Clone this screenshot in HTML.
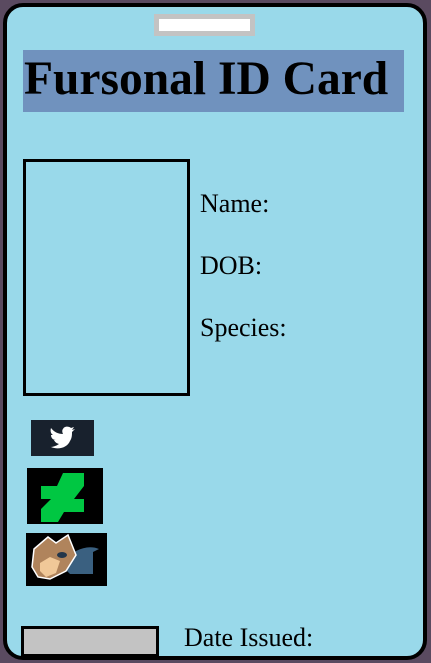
<!DOCTYPE html>
<html><head><style>
body{margin:0;width:431px;height:663px;background:#5a4a60;position:relative;overflow:hidden;font-family:"Liberation Serif",serif}
.card{position:absolute;left:3px;top:3px;width:416px;height:649px;background:#99d9ea;border:4px solid #000;border-radius:20px}
.a{position:absolute}
</style></head><body>
<div class="card"></div>
<div class="a" style="left:154px;top:14px;width:91px;height:12px;border:5px solid #c3c3c3;background:#fff"></div>
<div class="a" style="left:23px;top:50px;width:381px;height:62px;background:#7092be"></div>
<div class="a" style="left:24px;top:52px;font-weight:bold;font-size:47.5px;line-height:54px">Fursonal ID Card</div>
<div class="a" style="left:23px;top:159px;width:161px;height:231px;border:3px solid #000"></div>
<div class="a" style="left:200px;top:189px;font-size:26px">Name:</div>
<div class="a" style="left:200px;top:251px;font-size:26px">DOB:</div>
<div class="a" style="left:200px;top:313px;font-size:26px">Species:</div>
<div class="a" style="left:31px;top:420px;width:63px;height:36px;background:#18212d">
<svg width="63" height="36" viewBox="0 0 63 36"><path d="M20 27c7 3 16 1 19-6 2-3 2-6 2-9l3-3-3 1 2-3-3 1c-2-2-7-2-8 1-1 1-1 3 0 5-5 0-9-2-12-6-1 3 0 6 2 7h-2c0 3 2 5 5 5h-2c1 2 2 3 5 4-3 2-6 3-9 3z" fill="#fff"/></svg></div>
<div class="a" style="left:27px;top:468px;width:76px;height:56px;background:#000">
<svg width="76" height="56" viewBox="0 0 76 56"><path d="M14 18H30L36 5H57V18L47 31H57V44H37L31 54H14V41L24 31H14Z" fill="#00c742"/></svg></div>
<div class="a" style="left:26px;top:533px;width:81px;height:53px;background:#000">
<svg width="81" height="53" viewBox="0 0 81 53"><path d="M50 18c8-4 16-5 23-2l-6 3v22H44l-8-8z" fill="#3a6080"/><path d="M8 16l14-12 8 6 12-8 8 20-10 16-16 8-12-2-6-10z" fill="#b0845c" stroke="#fff" stroke-width="1.5"/><path d="M14 30l10-6 10 4-4 12-10 4-6-6z" fill="#f0c898"/><ellipse cx="36" cy="22" rx="5" ry="3" fill="#23364a"/></svg></div>
<div class="a" style="left:21px;top:626px;width:132px;height:25px;border:3px solid #000;background:#c3c3c3"></div>
<div class="a" style="left:184px;top:623px;font-size:26px">Date Issued:</div>
</body></html>
